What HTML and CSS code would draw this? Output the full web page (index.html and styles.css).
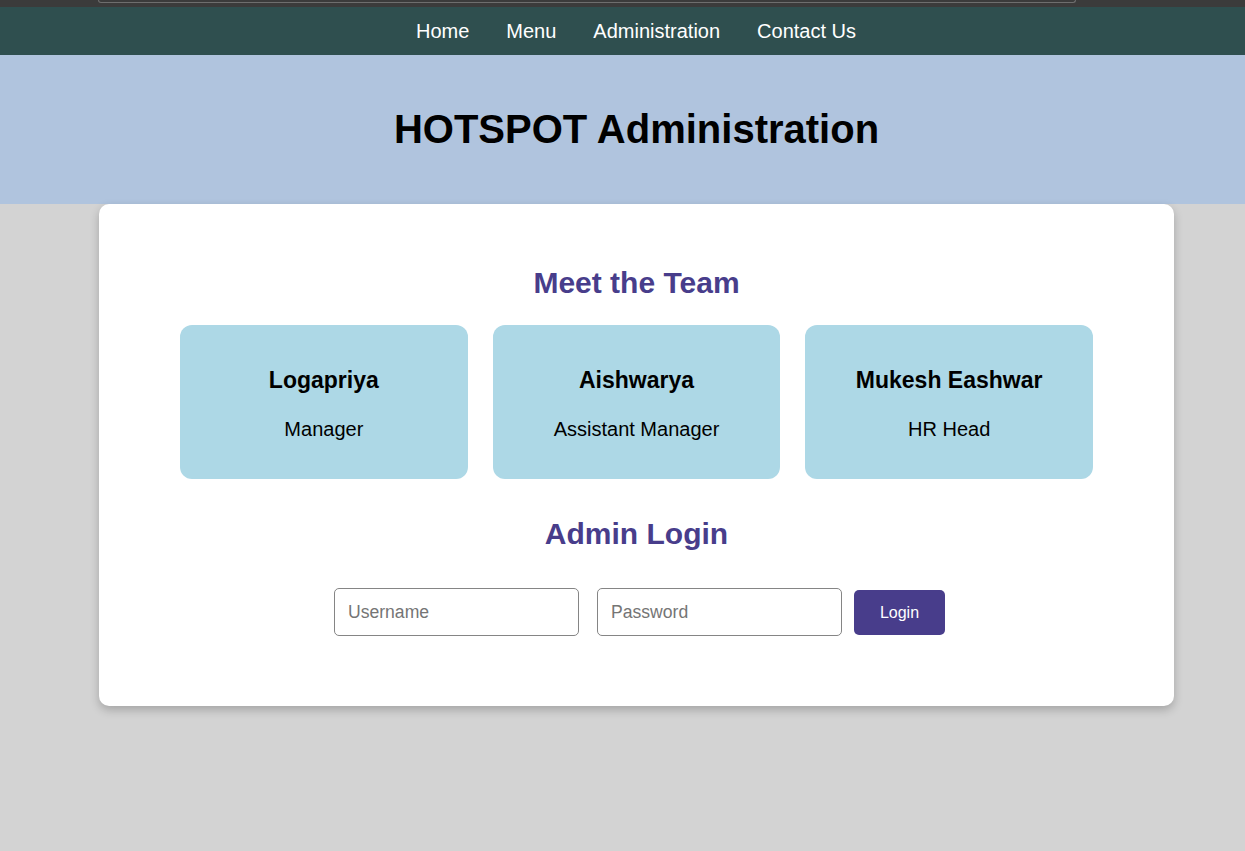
FILE: index.html
```html
<!DOCTYPE html>
<html lang="en">
<head>
<meta charset="utf-8">
<title>HOTSPOT Administration</title>
<link rel="stylesheet" href="styles.css">
</head>
<body>
<div class="topbar"><div class="addr"></div></div>
<nav class="nav">
  <ul class="nav-list">
    <li><a href="#">Home</a></li>
    <li><a href="#">Menu</a></li>
    <li><a href="#">Administration</a></li>
    <li><a href="#">Contact Us</a></li>
  </ul>
</nav>
<header class="hero">
  <h1 class="hero-title">HOTSPOT Administration</h1>
</header>
<main class="main">
  <section class="panel">
    <h2 class="section-title">Meet the Team</h2>
    <div class="team">
      <div class="card">
        <h3 class="card-name">Logapriya</h3>
        <p class="card-role">Manager</p>
      </div>
      <div class="card">
        <h3 class="card-name">Aishwarya</h3>
        <p class="card-role">Assistant Manager</p>
      </div>
      <div class="card">
        <h3 class="card-name">Mukesh Eashwar</h3>
        <p class="card-role">HR Head</p>
      </div>
    </div>
    <h2 class="section-title login-title">Admin Login</h2>
    <form class="login-form">
      <input class="field field-user" type="text" placeholder="Username">
      <input class="field field-pass" type="password" placeholder="Password">
      <button class="login-btn" type="button">Login</button>
    </form>
  </section>
</main>
</body>
</html>
```
FILE: styles.css
```css
* {
  box-sizing: border-box;
}

html, body {
  margin: 0;
  padding: 0;
}

body {
  background: #d3d3d3;
  font-family: "Liberation Sans", Arial, sans-serif;
  color: #000;
  min-height: 851px;
}

.topbar {
  height: 7px;
  background: #3b3b3b;
  overflow: hidden;
}

.addr {
  margin-left: 98px;
  width: 978px;
  height: 3px;
  border: 1px solid #6e6e6e;
  border-top: none;
  border-radius: 0 0 6px 6px;
}

.nav {
  background: #2f4f4f;
  height: 48px;
}

.nav-list {
  list-style: none;
  margin: 0;
  padding: 0 0 0 27px;
  height: 48px;
  display: flex;
  justify-content: center;
  align-items: center;
  gap: 37px;
}

.nav-list a {
  color: #fff;
  text-decoration: none;
  font-size: 20px;
  line-height: 23px;
}

.hero {
  background: #b0c4de;
  height: 149px;
  padding-left: 28px;
  display: flex;
  align-items: center;
  justify-content: center;
}

.hero-title {
  margin: 0;
  font-size: 40px;
  line-height: 46px;
  font-weight: bold;
  position: relative;
  top: -1px;
}

.main {
  padding-left: 28px;
}

.panel {
  width: 1075px;
  margin: 0 auto;
  background: #fff;
  border-radius: 10px;
  box-shadow: 0 4px 10px rgba(0, 0, 0, 0.22);
  padding: 62px 81px 70px;
}

.section-title {
  margin: 0;
  text-align: center;
  color: #483d8b;
  font-size: 30px;
  line-height: 34px;
  font-weight: bold;
}

.team {
  display: grid;
  grid-template-columns: 1fr 1fr 1fr;
  gap: 25px;
  margin-top: 25px;
}

.card {
  background: #add8e6;
  border-radius: 12px;
  padding: 42px 10px 38px;
  text-align: center;
  height: 154px;
}

.card-name {
  margin: 0;
  font-size: 23px;
  line-height: 27px;
  font-weight: bold;
}

.card-role {
  margin: 24px 0 0;
  font-size: 20px;
  line-height: 23px;
}

.login-title {
  margin-top: 38px;
}

.login-form {
  margin-top: 37px;
  display: flex;
  justify-content: center;
  align-items: center;
  padding-left: 6px;
}

.field {
  width: 245px;
  height: 48px;
  border: 1px solid #858585;
  border-radius: 5px;
  padding: 0 13px;
  font-family: "Liberation Sans", Arial, sans-serif;
  font-size: 17.6px;
  color: #000;
  background: #fff;
  outline: none;
}

.field::placeholder {
  color: #757575;
}

.field-user {
  margin-right: 18px;
}

.field-pass {
  margin-right: 12px;
}

.login-btn {
  background: #483d8b;
  color: #fff;
  border: none;
  border-radius: 5px;
  padding: 13px 26px;
  height: 45px;
  font-family: "Liberation Sans", Arial, sans-serif;
  font-size: 16px;
  line-height: 19px;
  cursor: pointer;
}
```
